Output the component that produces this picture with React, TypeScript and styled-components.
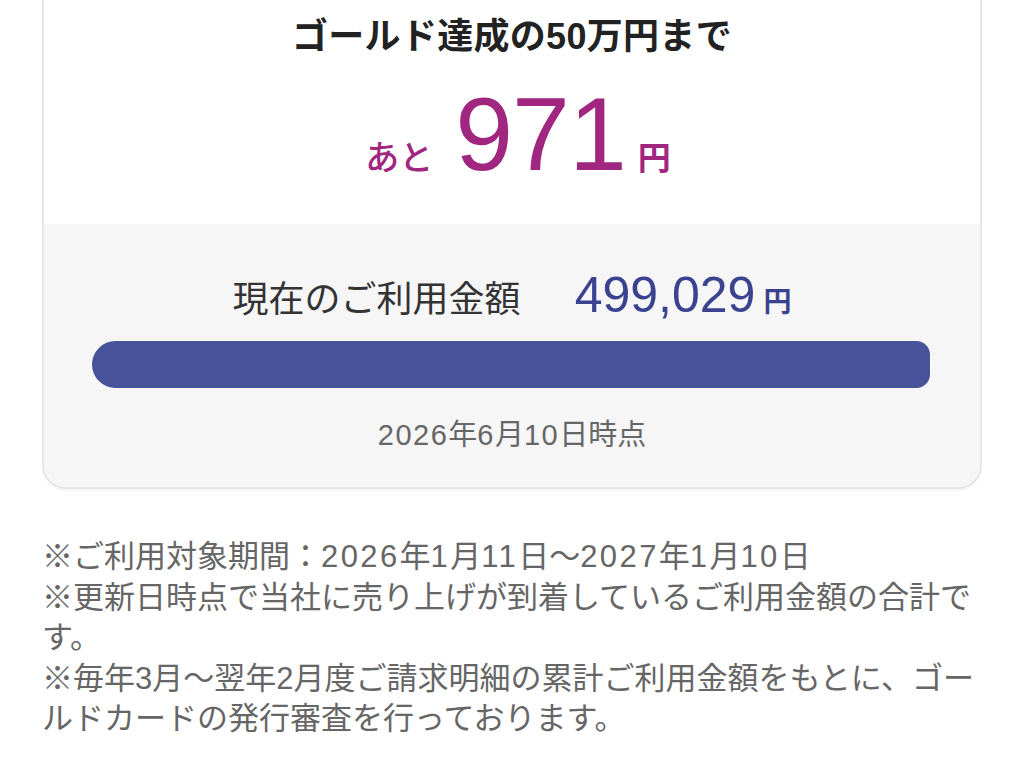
import React from "react";
import styled, { createGlobalStyle } from "styled-components";

const GlobalStyle = createGlobalStyle`
  html, body {
    margin: 0;
    padding: 0;
    background: #ffffff;
  }
  body {
    font-family: "Liberation Sans", "Noto Sans CJK JP", sans-serif;
    -webkit-font-smoothing: antialiased;
  }
`;

const Page = styled.main`
  margin-top: -30px;
  padding: 0 42px 40px;
  display: flex;
  flex-direction: column;
  gap: 48px;
`;

const Card = styled.section`
  border: 2px solid #e6e6e6;
  border-radius: 0 0 24px 24px;
  overflow: hidden;
  background: #ffffff;
  box-shadow: 0 2px 2px rgba(0, 0, 0, 0.04);
`;

const Summary = styled.div`
  padding: 40px 0 38px;
  display: flex;
  flex-direction: column;
  align-items: center;
  gap: 20px;
`;

const Heading = styled.h2`
  margin: 0;
  font-size: 36px;
  line-height: 50px;
  font-weight: 700;
  color: #222222;
  letter-spacing: 0.3px;
`;

const Remaining = styled.div`
  display: flex;
  align-items: baseline;
  justify-content: center;
  color: #a1267f;
  padding-left: 12px;
`;

const Unit = styled.span<{ $size: number; $before?: number; $after?: number; $bold?: boolean }>`
  font-size: ${(p) => p.$size}px;
  line-height: 1;
  font-weight: ${(p) => (p.$bold ? 700 : 500)};
  margin-left: ${(p) => p.$before ?? 0}px;
  margin-right: ${(p) => p.$after ?? 0}px;
`;

const BigNumber = styled.span`
  font-size: 104px;
  line-height: 1;
  font-weight: 400;
  letter-spacing: -1px;
`;

const Progress = styled.div`
  background: #f6f6f7;
  padding: 46px 48px 32px;
  display: flex;
  flex-direction: column;
  align-items: stretch;
`;

const AmountRow = styled.div`
  display: flex;
  align-items: baseline;
  justify-content: center;
  gap: 54px;
`;

const Label = styled.span`
  font-size: 36px;
  line-height: 1;
  color: #333333;
  font-weight: 400;
`;

const Amount = styled.span`
  display: flex;
  align-items: baseline;
  gap: 8px;
  color: #3b4390;
`;

const AmountNumber = styled.span`
  font-size: 50px;
  line-height: 1;
`;

const Track = styled.div`
  margin-top: 21px;
  height: 47px;
  border-radius: 24px;
  background: #ffffff;
`;

const Fill = styled.div`
  height: 100%;
  background: #47529b;
  border-radius: 24px 14px 14px 24px;
`;

const AsOf = styled.p`
  margin: 27px 0 0;
  text-align: center;
  font-size: 29px;
  line-height: 40px;
  color: #666666;
`;

/* Digits in the small gray copy are set a little wider than the body face */
const Num = styled.span<{ $track: number }>`
  letter-spacing: ${(p) => p.$track}px;
`;

const Notes = styled.div`
  font-size: 31px;
  line-height: 40.5px;
  color: #666666;
`;

const Note = styled.p`
  margin: 0;
`;

const current = 499029;
const goal = 500000;

export default function App() {
  const ratio = Math.min(current / goal, 1) * 100;
  return (
    <>
      <GlobalStyle />
      <Page>
        <Card>
          <Summary>
            <Heading>ゴールド達成の50万円まで</Heading>
            <Remaining>
              <Unit $size={34} $after={22}>あと</Unit>
              <BigNumber>{(goal - current).toLocaleString("ja-JP")}</BigNumber>
              <Unit $size={33} $before={12} $bold>円</Unit>
            </Remaining>
          </Summary>
          <Progress>
            <AmountRow>
              <Label>現在のご利用金額</Label>
              <Amount>
                <AmountNumber>{current.toLocaleString("ja-JP")}</AmountNumber>
                <Unit $size={28} $bold>円</Unit>
              </Amount>
            </AmountRow>
            <Track>
              <Fill style={{ width: `${ratio}%` }} />
            </Track>
            <AsOf>
              <Num $track={1.5}>2026</Num>年<Num $track={1.5}>6</Num>月<Num $track={1.5}>10</Num>日時点
            </AsOf>
          </Progress>
        </Card>
        <Notes>
          <Note>
            ※ご利用対象期間：<Num $track={2.4}>2026</Num>年<Num $track={2.4}>1</Num>月<Num $track={2.4}>11</Num>日～<Num $track={2.4}>2027</Num>年<Num $track={2.4}>1</Num>月<Num $track={2.4}>10</Num>日
          </Note>
          <Note>※更新日時点で当社に売り上げが到着しているご利用金額の合計です。</Note>
          <Note>※毎年3月～翌年2月度ご請求明細の累計ご利用金額をもとに、ゴールドカードの発行審査を行っております。</Note>
        </Notes>
      </Page>
    </>
  );
}
